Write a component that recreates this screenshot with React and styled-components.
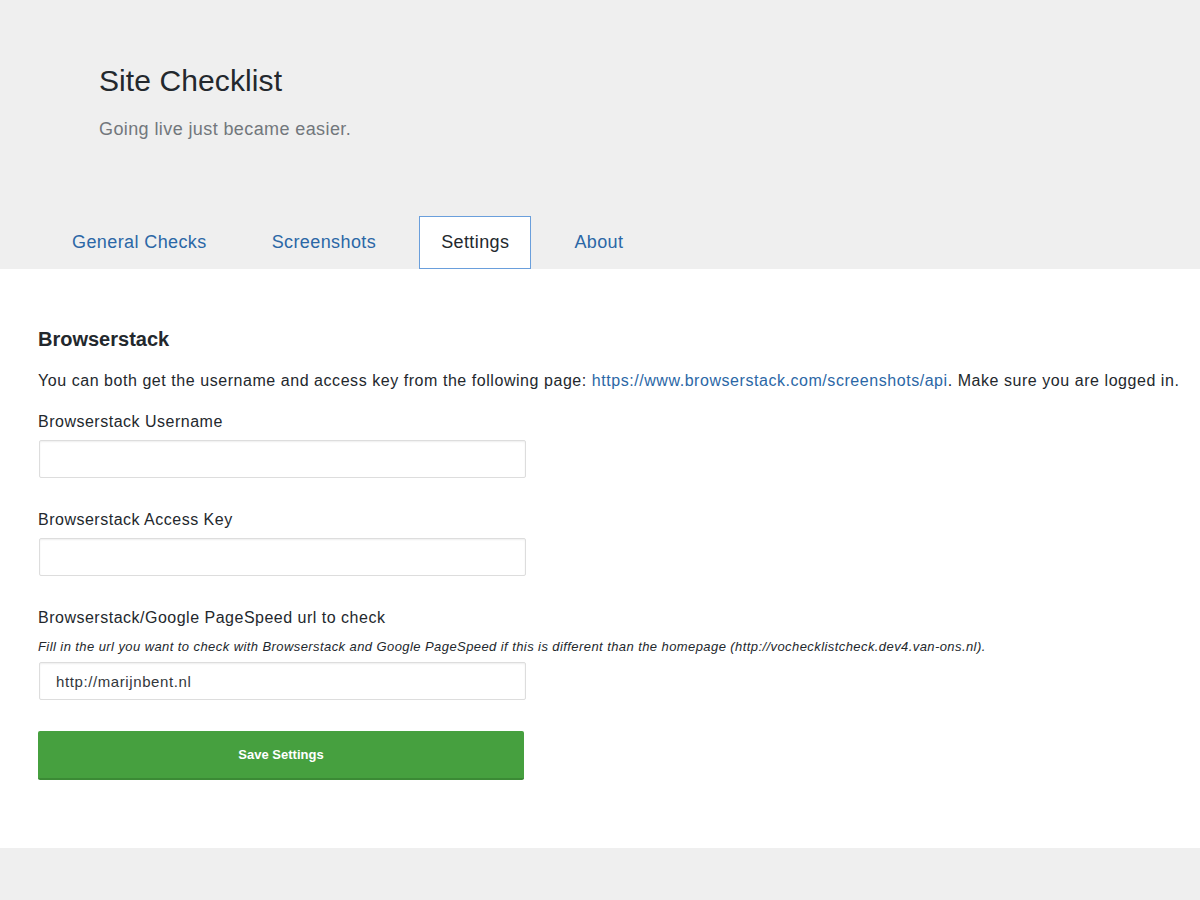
import React from 'react'
import styled, { createGlobalStyle } from 'styled-components'

const GlobalStyle = createGlobalStyle`
    body {
        margin: 0;
        background: #efefef;
        font-family: "Liberation Sans", Arial, sans-serif;
        color: #23282d;
    }
`

const tabs = ['General Checks', 'Screenshots', 'Settings', 'About']

function App() {
    const [active, setActive] = React.useState('Settings')
    const [url, setUrl] = React.useState('http://marijnbent.nl')

    return (
        <Page>
            <GlobalStyle />
            <Header>
                <Title>Site Checklist</Title>
                <Tagline>Going live just became easier.</Tagline>
            </Header>
            <Tabs>
                {tabs.map((tab) => (
                    <Tab key={tab} $active={tab === active} onClick={() => setActive(tab)}>
                        {tab}
                    </Tab>
                ))}
            </Tabs>
            <Panel>
                <Heading>Browserstack</Heading>
                <Intro>
                    You can both get the username and access key from the following page:{' '}
                    <a href="#api">https://www.browserstack.com/screenshots/api</a>. Make sure you are logged in.
                </Intro>
                <Field>
                    <Label>Browserstack Username</Label>
                    <Input type="text" />
                </Field>
                <Field>
                    <Label>Browserstack Access Key</Label>
                    <Input type="text" />
                </Field>
                <Field>
                    <Label>Browserstack/Google PageSpeed url to check</Label>
                    <Hint>
                        Fill in the url you want to check with Browserstack and Google PageSpeed if this is different than the homepage (http://vochecklistcheck.dev4.van-ons.nl).
                    </Hint>
                    <Input type="text" value={url} onChange={(e) => setUrl(e.target.value)} />
                </Field>
                <SaveButton type="button">Save Settings</SaveButton>
            </Panel>
        </Page>
    )
}

const Page = styled.div`
    min-height: 900px;
`

const Header = styled.header`
    padding: 63px 0 0 99px;
    height: 154px;
    box-sizing: border-box;
`

const Title = styled.h1`
    margin: 0;
    font-size: 30px;
    font-weight: 400;
    line-height: 36px;
    color: #23282d;
    letter-spacing: 0.1px;
`

const Tagline = styled.p`
    margin: 18px 0 0;
    font-size: 18px;
    line-height: 24px;
    color: #72777c;
    letter-spacing: 0.4px;
`

const Tabs = styled.nav`
    display: flex;
    gap: 21px;
    padding: 62px 0 0 50px;
`

const Tab = styled.button`
    height: 53px;
    padding: 0 21px;
    font-family: inherit;
    font-size: 18px;
    letter-spacing: 0.4px;
    background: ${(p) => (p.$active ? '#fff' : 'transparent')};
    color: ${(p) => (p.$active ? '#23282d' : '#2b67a6')};
    border: 1px solid ${(p) => (p.$active ? '#6a9fdc' : 'transparent')};
    cursor: pointer;
`

const Panel = styled.section`
    background: #fff;
    padding: 58px 38px 68px;
`

const Heading = styled.h2`
    margin: 0;
    font-size: 20px;
    line-height: 24px;
    font-weight: 700;
`

const Intro = styled.p`
    margin: 18px 0 17px;
    font-size: 16px;
    line-height: 24px;
    letter-spacing: 0.55px;
    white-space: nowrap;

    a {
        color: #2b67a6;
        text-decoration: none;
    }
`

const Field = styled.div`
    display: flex;
    flex-direction: column;
    align-items: flex-start;
    margin-bottom: 30px;
`

const Label = styled.label`
    font-size: 16px;
    line-height: 24px;
    letter-spacing: 0.5px;
    margin-bottom: 6px;
`

const Hint = styled.p`
    margin: 2px 0 6px;
    font-size: 13px;
    line-height: 18px;
    font-style: italic;
    letter-spacing: 0.42px;
    white-space: nowrap;
`

const Input = styled.input`
    width: 487px;
    height: 38px;
    box-sizing: border-box;
    margin-left: 1px;
    padding: 0 16px;
    border: 1px solid #ddd;
    border-radius: 2px;
    box-shadow: inset 0 1px 2px rgba(0, 0, 0, 0.07);
    font-family: inherit;
    font-size: 15px;
    letter-spacing: 0.6px;
    color: #32373c;
    outline: none;
`

const SaveButton = styled.button`
    display: block;
    width: 486px;
    height: 49px;
    margin-top: 31px;
    background: #46a03f;
    border: none;
    border-bottom: 2px solid #3b8a35;
    border-radius: 2px;
    color: #fff;
    font-family: inherit;
    font-size: 13px;
    font-weight: 700;
    cursor: pointer;
`

export default App
